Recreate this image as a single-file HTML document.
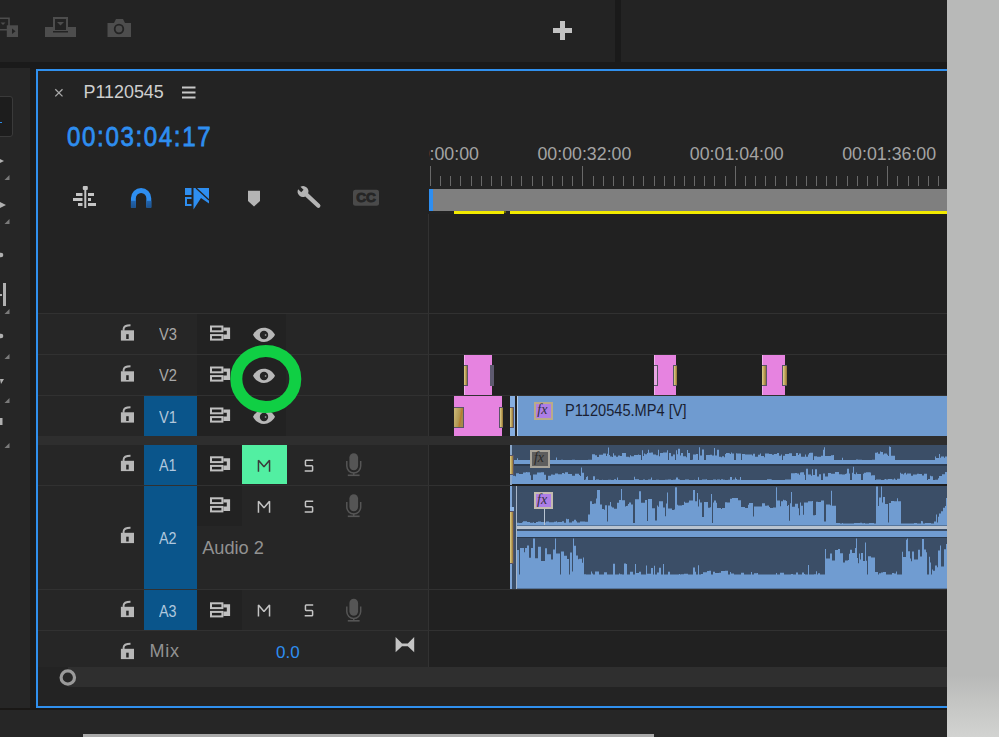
<!DOCTYPE html>
<html><head><meta charset="utf-8"><style>
*{margin:0;padding:0;box-sizing:border-box}
html,body{width:999px;height:737px;overflow:hidden;background:#262626;font-family:"Liberation Sans",sans-serif}
.a{position:absolute}
.t{position:absolute;white-space:nowrap;line-height:1}
svg{position:absolute;overflow:visible}
</style></head>
<body>
<div class="a" style="left:0px;top:0px;width:947px;height:69px;background:#1a1a1a;"></div>
<div class="a" style="left:0px;top:0px;width:615px;height:62px;background:#232323;"></div>
<div class="a" style="left:621px;top:0px;width:326px;height:62px;background:#232323;"></div>
<svg style="left:0;top:0" width="140" height="62">
<g fill="#4d4d4d">
<path d="M-2,17.4H9.8V30.5H-2ZM-2,19H8.2V29H-2Z" fill-rule="evenodd"/>
<path d="M0.5,22.5H5.5L3,25Z"/>
<rect x="6.8" y="25.3" width="11.2" height="11.7"/>
<path d="M12,28.5L15.5,31.2L12,34Z" fill="#232323"/>
<path d="M45,27H53V17H68V27H76V37H45Z"/>
<rect x="55" y="19" width="11" height="11" fill="#232323"/>
<path d="M57,22H64L60.5,25.5Z"/>
<rect x="53" y="31" width="15" height="1.5" fill="#232323"/>
<path d="M107.5,23H114L116,19H123L125,23H131V37H107.5Z"/>
<circle cx="119" cy="29" r="4.3" fill="none" stroke="#232323" stroke-width="1.8"/>
</g></svg>
<div class="a" style="left:553px;top:28px;width:19px;height:5px;background:#c2c2c2;"></div>
<div class="a" style="left:560px;top:21px;width:5px;height:19px;background:#c2c2c2;"></div>
<div class="a" style="left:0px;top:69px;width:36px;height:641px;background:#1b1b1b;"></div>
<div class="a" style="left:0px;top:68px;width:30px;height:640px;background:#262626;"></div>
<div class="a" style="left:-5px;top:96px;width:18px;height:41px;background:#1d1d1d;border:1px solid #3a3a3a;border-radius:3px"></div>
<div class="a" style="left:0px;top:122px;width:2px;height:1px;background:#2d8ae6;"></div>
<svg style="left:0;top:0" width="30" height="737"><g fill="#7a7a7a"><path d="M9.5,175V180H4.5Z"/><path d="M9.5,219V224H4.5Z"/><path d="M9.5,309V314H4.5Z"/><path d="M9.5,354V359H4.5Z"/><path d="M9.5,398V403H4.5Z"/><path d="M9.5,443V448H4.5Z"/></g><g fill="#b0b0b0"><path d="M0,159L4,161L0,163Z"/><path d="M0,202L6,205L0,208Z"/><circle cx="1" cy="255" r="2.3"/><rect x="3" y="283" width="3" height="23"/><rect x="0" y="294" width="2" height="2"/><circle cx="1" cy="336" r="2.3"/><path d="M0,379H4L1,384Z"/><rect x="0" y="418" width="2.5" height="7"/></g></svg>
<div class="a" style="left:0px;top:708px;width:947px;height:2px;background:#1a1816;"></div>
<div class="a" style="left:83px;top:734px;width:571px;height:3px;background:#a9a9a9;"></div>
<div class="a" style="left:36px;top:68.5px;width:920px;height:639.5px;background:#232323;border:2px solid #3090ee"></div>
<div class="a" style="left:429px;top:214px;width:518px;height:453px;background:#212121;"></div>
<svg style="left:0;top:0" width="220" height="110"><g stroke="#aaaaaa" stroke-width="1.3"><path d="M55.3,89.2L62.5,96.4M62.5,89.2L55.3,96.4"/></g>
<g fill="#c8c8c8"><rect x="182" y="86.5" width="13.5" height="2"/><rect x="182" y="91.5" width="13.5" height="2"/><rect x="182" y="96.5" width="13.5" height="2"/></g></svg>
<div class="t" style="left:83.5px;top:84px;font-size:17.9px;color:#cfcfcf;">P1120545</div>
<div class="t" style="left:66.5px;top:121.5px;font-size:28.4px;color:#2e8ef0;transform:scaleX(0.85);transform-origin:0 0;letter-spacing:1.9px;-webkit-text-stroke:0.8px #2e8ef0">00:03:04:17</div>
<svg style="left:0;top:0" width="400" height="220">
<g fill="#c4c4c4">
<rect x="84.3" y="189" width="2" height="19"/><rect x="82.8" y="186" width="5" height="4" rx="1"/>
<rect x="76" y="193" width="6.5" height="3"/><rect x="88" y="193" width="6" height="3"/>
<rect x="73" y="198" width="9.5" height="3"/><rect x="88" y="198" width="3" height="3"/>
<rect x="78" y="203" width="4.5" height="3"/><rect x="88" y="203" width="8" height="3"/>
</g>
<defs><linearGradient id="mg" x1="0" y1="0" x2="0" y2="1"><stop offset="0" stop-color="#2366b0"/><stop offset="1" stop-color="#1b5290"/></linearGradient></defs>
<path d="M133.4,207.5V198.2A7.7,7.7 0 0 1 148.8,198.2V207.5" fill="none" stroke="#2e8ef0" stroke-width="4.9"/>
<rect x="130.9" y="200.8" width="5" height="6.8" fill="url(#mg)"/><rect x="146.3" y="200.8" width="5" height="6.8" fill="url(#mg)"/>
<g fill="#2e8ef0">
<rect x="185" y="188" width="6.5" height="7"/>
<path d="M185,197H191.5V206H185ZM187,199V204H191.5V199Z" fill-rule="evenodd"/>
<path d="M193.5,188H209V203.5L201,198L193.5,209.5Z"/>
</g>
<path d="M196,188L209,200" stroke="#232323" stroke-width="1.3"/>
<path d="M248,190.7H260V201L254,206.5L248,201Z" fill="#b4b4b4"/>
<g transform="translate(303,191.5) rotate(-47)" fill="#b4b4b4">
<path d="M-5.4,0A5.4,5.4 0 0 1 -1.7,-5.1V-0.8H1.7V-5.1A5.4,5.4 0 0 1 5.4,0A5.4,5.4 0 0 1 2.1,5V21A2.1,2.1 0 0 1 -2.1,21V5A5.4,5.4 0 0 1 -5.4,0Z"/>
</g>
<rect x="353" y="189.7" width="26" height="16" rx="2.5" fill="#4a4a4a"/>
<text x="356.3" y="202.3" font-family="Liberation Sans" font-weight="bold" font-size="12.8" fill="#252525" stroke="#252525" stroke-width="0.9" textLength="19.6" lengthAdjust="spacingAndGlyphs">CC</text>
</svg>
<div class="a" style="left:429px;top:140px;width:518px;height:30px;overflow:hidden">
<div class="t" style="left:-44.0px;top:6px;width:94px;text-align:center;font-size:17.8px;color:#a4a4a4">00:00:00:00</div>
<div class="t" style="left:108.4px;top:6px;width:94px;text-align:center;font-size:17.8px;color:#a4a4a4">00:00:32:00</div>
<div class="t" style="left:260.8px;top:6px;width:94px;text-align:center;font-size:17.8px;color:#a4a4a4">00:01:04:00</div>
<div class="t" style="left:413.2px;top:6px;width:94px;text-align:center;font-size:17.8px;color:#a4a4a4">00:01:36:00</div>
</div>
<svg style="left:0;top:0" width="947" height="220"><g fill="#696969"><rect x="430" y="166" width="1" height="20"/><rect x="440" y="176" width="1" height="10"/><rect x="450" y="176" width="1" height="10"/><rect x="460" y="176" width="1" height="10"/><rect x="471" y="176" width="1" height="10"/><rect x="481" y="176" width="1" height="10"/><rect x="491" y="176" width="1" height="10"/><rect x="501" y="176" width="1" height="10"/><rect x="511" y="176" width="1" height="10"/><rect x="521" y="176" width="1" height="10"/><rect x="532" y="176" width="1" height="10"/><rect x="542" y="176" width="1" height="10"/><rect x="552" y="176" width="1" height="10"/><rect x="562" y="176" width="1" height="10"/><rect x="572" y="176" width="1" height="10"/><rect x="582" y="166" width="1" height="20"/><rect x="593" y="176" width="1" height="10"/><rect x="603" y="176" width="1" height="10"/><rect x="613" y="176" width="1" height="10"/><rect x="623" y="176" width="1" height="10"/><rect x="633" y="176" width="1" height="10"/><rect x="643" y="176" width="1" height="10"/><rect x="654" y="176" width="1" height="10"/><rect x="664" y="176" width="1" height="10"/><rect x="674" y="176" width="1" height="10"/><rect x="684" y="176" width="1" height="10"/><rect x="694" y="176" width="1" height="10"/><rect x="704" y="176" width="1" height="10"/><rect x="714" y="176" width="1" height="10"/><rect x="725" y="176" width="1" height="10"/><rect x="735" y="166" width="1" height="20"/><rect x="745" y="176" width="1" height="10"/><rect x="755" y="176" width="1" height="10"/><rect x="765" y="176" width="1" height="10"/><rect x="775" y="176" width="1" height="10"/><rect x="786" y="176" width="1" height="10"/><rect x="796" y="176" width="1" height="10"/><rect x="806" y="176" width="1" height="10"/><rect x="816" y="176" width="1" height="10"/><rect x="826" y="176" width="1" height="10"/><rect x="836" y="176" width="1" height="10"/><rect x="847" y="176" width="1" height="10"/><rect x="857" y="176" width="1" height="10"/><rect x="867" y="176" width="1" height="10"/><rect x="877" y="176" width="1" height="10"/><rect x="887" y="166" width="1" height="20"/><rect x="897" y="176" width="1" height="10"/><rect x="908" y="176" width="1" height="10"/><rect x="918" y="176" width="1" height="10"/><rect x="928" y="176" width="1" height="10"/><rect x="938" y="176" width="1" height="10"/></g></svg>
<div class="a" style="left:433px;top:189px;width:514px;height:22px;background:#7f7f7f;"></div>
<div class="a" style="left:429px;top:189px;width:3.5px;height:22px;background:#2e8ef0;"></div>
<div class="a" style="left:454px;top:211px;width:50px;height:3px;background:#f2ea00;"></div>
<div class="a" style="left:510px;top:211px;width:437px;height:3px;background:#f2ea00;"></div>
<div class="a" style="left:504px;top:211px;width:2px;height:2px;background:#6a6a00;"></div>
<div class="a" style="left:38px;top:313px;width:390px;height:354px;background:#262626;"></div>
<div class="a" style="left:427.5px;top:214px;width:1.6px;height:453px;background:#323232;"></div>
<div class="a" style="left:38px;top:312.6px;width:909px;height:1.7px;background:#313131;"></div>
<div class="a" style="left:38px;top:353.6px;width:909px;height:1.7px;background:#313131;"></div>
<div class="a" style="left:38px;top:394.6px;width:909px;height:1.7px;background:#313131;"></div>
<div class="a" style="left:38px;top:484.6px;width:909px;height:1.7px;background:#313131;"></div>
<div class="a" style="left:38px;top:588.6px;width:909px;height:1.7px;background:#313131;"></div>
<div class="a" style="left:38px;top:629.6px;width:909px;height:1.7px;background:#313131;"></div>
<div class="a" style="left:38px;top:436px;width:909px;height:9px;background:#2e2e2e;"></div>
<div class="a" style="left:197px;top:445px;width:45px;height:40px;background:#222222;"></div>
<div class="a" style="left:197px;top:486px;width:45px;height:40px;background:#222222;"></div>
<div class="a" style="left:197px;top:590px;width:45px;height:40px;background:#222222;"></div>
<div class="a" style="left:197px;top:314px;width:89px;height:40px;background:#222222;"></div>
<div class="a" style="left:197px;top:355px;width:89px;height:40px;background:#222222;"></div>
<div class="a" style="left:197px;top:396px;width:89px;height:40px;background:#222222;"></div>
<div class="a" style="left:144px;top:396px;width:53px;height:40px;background:#0a558b;"></div>
<div class="a" style="left:144px;top:445px;width:53px;height:40px;background:#0a558b;"></div>
<div class="a" style="left:144px;top:486px;width:53px;height:103px;background:#0a558b;"></div>
<div class="a" style="left:144px;top:590px;width:53px;height:40px;background:#0a558b;"></div>
<svg style="left:0;top:0" width="430" height="700"><g transform="translate(120.9,324.3)"><path d="M2.7,6.5V4.6Q3,1 9.6,1" fill="none" stroke="#b4b4b4" stroke-width="1.9"/><rect x="0" y="6" width="13.1" height="10.3" fill="#b8b8b8"/><rect x="5.3" y="9.9" width="2.5" height="4.8" fill="#262626"/></g><g transform="translate(210,325.5)"><g fill="none" stroke="#c0c0c0" stroke-width="2"><rect x="1" y="1" width="11.4" height="4.8"/><rect x="1" y="9.6" width="11.4" height="4.5"/></g><path d="M13.4,1.9H20.1V13.6H13.4V9.1H16.8V5.2H13.4Z" fill="#c0c0c0"/></g><g transform="translate(120.9,365.3)"><path d="M2.7,6.5V4.6Q3,1 9.6,1" fill="none" stroke="#b4b4b4" stroke-width="1.9"/><rect x="0" y="6" width="13.1" height="10.3" fill="#b8b8b8"/><rect x="5.3" y="9.9" width="2.5" height="4.8" fill="#262626"/></g><g transform="translate(210,366.5)"><g fill="none" stroke="#c0c0c0" stroke-width="2"><rect x="1" y="1" width="11.4" height="4.8"/><rect x="1" y="9.6" width="11.4" height="4.5"/></g><path d="M13.4,1.9H20.1V13.6H13.4V9.1H16.8V5.2H13.4Z" fill="#c0c0c0"/></g><g transform="translate(120.9,406.3)"><path d="M2.7,6.5V4.6Q3,1 9.6,1" fill="none" stroke="#b4b4b4" stroke-width="1.9"/><rect x="0" y="6" width="13.1" height="10.3" fill="#b8b8b8"/><rect x="5.3" y="9.9" width="2.5" height="4.8" fill="#262626"/></g><g transform="translate(210,407.5)"><g fill="none" stroke="#c0c0c0" stroke-width="2"><rect x="1" y="1" width="11.4" height="4.8"/><rect x="1" y="9.6" width="11.4" height="4.5"/></g><path d="M13.4,1.9H20.1V13.6H13.4V9.1H16.8V5.2H13.4Z" fill="#c0c0c0"/></g><g transform="translate(253,327.6)"><path d="M0,7.2C5,-2.3 17,-2.3 22,7.2C17,16.7 5,16.7 0,7.2Z" fill="#b8b8b8"/><circle cx="11" cy="7.4" r="4.2" fill="#262626"/><circle cx="12.6" cy="7.4" r="0.9" fill="#8a8a8a"/></g><g transform="translate(253,368.6)"><path d="M0,7.2C5,-2.3 17,-2.3 22,7.2C17,16.7 5,16.7 0,7.2Z" fill="#b8b8b8"/><circle cx="11" cy="7.4" r="4.2" fill="#262626"/><circle cx="12.6" cy="7.4" r="0.9" fill="#8a8a8a"/></g><g transform="translate(253,409.6)"><path d="M0,7.2C5,-2.3 17,-2.3 22,7.2C17,16.7 5,16.7 0,7.2Z" fill="#b8b8b8"/><circle cx="11" cy="7.4" r="4.2" fill="#262626"/><circle cx="12.6" cy="7.4" r="0.9" fill="#8a8a8a"/></g><g transform="translate(120.9,454.8)"><path d="M2.7,6.5V4.6Q3,1 9.6,1" fill="none" stroke="#b4b4b4" stroke-width="1.9"/><rect x="0" y="6" width="13.1" height="10.3" fill="#b8b8b8"/><rect x="5.3" y="9.9" width="2.5" height="4.8" fill="#262626"/></g><g transform="translate(210,456.3)"><g fill="none" stroke="#c0c0c0" stroke-width="2"><rect x="1" y="1" width="11.4" height="4.8"/><rect x="1" y="9.6" width="11.4" height="4.5"/></g><path d="M13.4,1.9H20.1V13.6H13.4V9.1H16.8V5.2H13.4Z" fill="#c0c0c0"/></g><g transform="translate(346,453)" fill="#555555"><rect x="3.4" y="0.2" width="8.7" height="17" rx="4.35"/><path d="M0.8,8V13A6.95,6.95 0 0 0 14.7,13V8" fill="none" stroke="#555555" stroke-width="1.5"/><rect x="7" y="19.5" width="1.5" height="2.5"/><rect x="1.8" y="21.5" width="11.8" height="1.6"/></g><g transform="translate(120.9,526.8)"><path d="M2.7,6.5V4.6Q3,1 9.6,1" fill="none" stroke="#b4b4b4" stroke-width="1.9"/><rect x="0" y="6" width="13.1" height="10.3" fill="#b8b8b8"/><rect x="5.3" y="9.9" width="2.5" height="4.8" fill="#262626"/></g><g transform="translate(210,497.3)"><g fill="none" stroke="#c0c0c0" stroke-width="2"><rect x="1" y="1" width="11.4" height="4.8"/><rect x="1" y="9.6" width="11.4" height="4.5"/></g><path d="M13.4,1.9H20.1V13.6H13.4V9.1H16.8V5.2H13.4Z" fill="#c0c0c0"/></g><g transform="translate(346,494)" fill="#555555"><rect x="3.4" y="0.2" width="8.7" height="17" rx="4.35"/><path d="M0.8,8V13A6.95,6.95 0 0 0 14.7,13V8" fill="none" stroke="#555555" stroke-width="1.5"/><rect x="7" y="19.5" width="1.5" height="2.5"/><rect x="1.8" y="21.5" width="11.8" height="1.6"/></g><g transform="translate(120.9,600.8)"><path d="M2.7,6.5V4.6Q3,1 9.6,1" fill="none" stroke="#b4b4b4" stroke-width="1.9"/><rect x="0" y="6" width="13.1" height="10.3" fill="#b8b8b8"/><rect x="5.3" y="9.9" width="2.5" height="4.8" fill="#262626"/></g><g transform="translate(210,602.3)"><g fill="none" stroke="#c0c0c0" stroke-width="2"><rect x="1" y="1" width="11.4" height="4.8"/><rect x="1" y="9.6" width="11.4" height="4.5"/></g><path d="M13.4,1.9H20.1V13.6H13.4V9.1H16.8V5.2H13.4Z" fill="#c0c0c0"/></g><g transform="translate(346,598.5)" fill="#555555"><rect x="3.4" y="0.2" width="8.7" height="17" rx="4.35"/><path d="M0.8,8V13A6.95,6.95 0 0 0 14.7,13V8" fill="none" stroke="#555555" stroke-width="1.5"/><rect x="7" y="19.5" width="1.5" height="2.5"/><rect x="1.8" y="21.5" width="11.8" height="1.6"/></g><g transform="translate(120.9,642.8)"><path d="M2.7,6.5V4.6Q3,1 9.6,1" fill="none" stroke="#b4b4b4" stroke-width="1.9"/><rect x="0" y="6" width="13.1" height="10.3" fill="#b8b8b8"/><rect x="5.3" y="9.9" width="2.5" height="4.8" fill="#262626"/></g></svg>
<div class="a" style="left:242px;top:444.6px;width:44.8px;height:39.8px;background:#52efa2;"></div>
<div class="t" style="left:158.7px;top:326.4px;font-size:17.3px;color:#a8a8a8;transform:scaleX(0.85);transform-origin:0 0">V3</div>
<div class="t" style="left:158.7px;top:367.4px;font-size:17.3px;color:#a8a8a8;transform:scaleX(0.85);transform-origin:0 0">V2</div>
<div class="t" style="left:158.7px;top:408.6px;font-size:17.3px;color:#b2c6da;transform:scaleX(0.85);transform-origin:0 0">V1</div>
<div class="t" style="left:158.9px;top:457px;font-size:16.4px;color:#b0c8de;transform:scaleX(0.875);transform-origin:0 0">A1</div>
<div class="t" style="left:158.9px;top:529.7px;font-size:16.4px;color:#b0c8de;transform:scaleX(0.875);transform-origin:0 0">A2</div>
<div class="t" style="left:158.9px;top:602.5px;font-size:16.4px;color:#b0c8de;transform:scaleX(0.875);transform-origin:0 0">A3</div>
<svg style="left:0;top:0" width="430" height="700"><path d="M258.45,471.8V460.25L264,466.7L269.55,460.25V471.8" fill="none" stroke="#3a3a3a" stroke-width="1.5" stroke-linejoin="bevel"/><path d="M313.2,460.25H306.2Q305.45,460.25 305.45,461.1V464.9Q305.45,465.7 306.2,465.7H311.8Q312.6,465.7 312.6,466.5V470.2Q312.6,471.0 311.8,471.0H304.7" fill="none" stroke="#c4c4c4" stroke-width="1.5"/><path d="M258.45,512.8V501.25L264,507.7L269.55,501.25V512.8" fill="none" stroke="#c4c4c4" stroke-width="1.5" stroke-linejoin="bevel"/><path d="M313.2,501.25H306.2Q305.45,501.25 305.45,502.1V505.9Q305.45,506.7 306.2,506.7H311.8Q312.6,506.7 312.6,507.5V511.2Q312.6,512.0 311.8,512.0H304.7" fill="none" stroke="#c4c4c4" stroke-width="1.5"/><path d="M258.45,616.5V604.95L264,611.4000000000001L269.55,604.95V616.5" fill="none" stroke="#c4c4c4" stroke-width="1.5" stroke-linejoin="bevel"/><path d="M313.2,604.95H306.2Q305.45,604.95 305.45,605.8000000000001V609.6Q305.45,610.4000000000001 306.2,610.4000000000001H311.8Q312.6,610.4000000000001 312.6,611.2V614.9000000000001Q312.6,615.7 311.8,615.7H304.7" fill="none" stroke="#c4c4c4" stroke-width="1.5"/></svg>
<div class="t" style="left:202.2px;top:538.6px;font-size:18.2px;color:#929292;">Audio 2</div>
<div class="t" style="left:149.5px;top:642.3px;font-size:18px;color:#929292;letter-spacing:0.7px">Mix</div>
<div class="t" style="left:276px;top:644px;font-size:17px;color:#2e8ef0;">0.0</div>
<svg style="left:0;top:0" width="430" height="700"><path d="M395.6,637V652.2L402,646.2H407.8L414.2,652.2V637L407.8,643.5H402Z" fill="#c4c4c4"/></svg>
<div class="a" style="left:67.7px;top:667.4px;width:880px;height:19.3px;background:#2f2f2f;"></div>
<svg style="left:0;top:0" width="100" height="700"><circle cx="67.8" cy="677.5" r="6.7" fill="#272727" stroke="#9a9a9a" stroke-width="3.2"/></svg>
<div class="a" style="left:463.8px;top:355px;width:28.5px;height:40px;background:#e683e0;"></div>
<div class="a" style="left:463.8px;top:355px;width:1.2px;height:40px;background:#f2b0ee;"></div>
<div class="a" style="left:654.1px;top:355px;width:21.899999999999977px;height:40px;background:#e683e0;"></div>
<div class="a" style="left:654.1px;top:355px;width:1.2px;height:40px;background:#f2b0ee;"></div>
<div class="a" style="left:762.1px;top:355px;width:23.399999999999977px;height:40px;background:#e683e0;"></div>
<div class="a" style="left:762.1px;top:355px;width:1.2px;height:40px;background:#f2b0ee;"></div>
<div class="a" style="left:463.8px;top:365.2px;width:4.7px;height:21px;background:linear-gradient(90deg,#ded08e,#b89a52 60%,#8f7438);border:1px solid #5a5468;border-left:none"></div>
<div class="a" style="left:490.4px;top:365.2px;width:3.3px;height:21px;background:#5e5a70;"></div>
<div class="a" style="left:654.1px;top:365.2px;width:3.6px;height:21px;background:#e9a6e4;border:1px solid #5a5468;border-left:none"></div>
<div class="a" style="left:672.9px;top:365.2px;width:4.3px;height:21px;background:linear-gradient(90deg,#ded08e,#b89a52 60%,#8f7438);border:1px solid #5a5468;border-right:none"></div>
<div class="a" style="left:762.1px;top:365.2px;width:4.9px;height:21px;background:linear-gradient(90deg,#ded08e,#b89a52 60%,#8f7438);border:1px solid #5a5468;border-left:none"></div>
<div class="a" style="left:781.8px;top:365.2px;width:4.8px;height:21px;background:linear-gradient(90deg,#ded08e,#b89a52 60%,#8f7438);border:1px solid #5a5468;border-right:none"></div>
<div class="a" style="left:453.8px;top:396.1px;width:48.4px;height:40px;background:#e683e0;"></div>
<div class="a" style="left:453.8px;top:407px;width:10px;height:20.6px;background:linear-gradient(100deg,#cdbb7a,#b09650 55%,#b87a2c 68%,#a58a48 78%);border:1px solid #5a5468;border-left:none"></div>
<div class="a" style="left:498.9px;top:407px;width:3.8px;height:20.6px;background:linear-gradient(90deg,#ded08e,#b89a52 60%,#8f7438);border:1px solid #5a5468;border-right:none"></div>
<div class="a" style="left:509.8px;top:396.1px;width:5.7px;height:40px;background:#86aee0;"></div>
<div class="a" style="left:509.8px;top:407px;width:4.7px;height:20.6px;background:linear-gradient(90deg,#ded08e,#b89a52 60%,#8f7438);border:1px solid #5a5468;border-left:none"></div>
<div class="a" style="left:517.3px;top:396.1px;width:430px;height:40px;background:#6f9bd0;"></div>
<div class="a" style="left:517.3px;top:396.1px;width:1.2px;height:40px;background:#b9d0ea;"></div>
<div class="a" style="left:533.8px;top:402px;width:19.5px;height:17.5px;background:#ae7ee6;border:2px solid #b9ab8a"></div>
<div class="t" style="left:537.3px;top:403px;font-size:14px;font-style:italic;color:#33303f;font-family:'Liberation Serif',serif">fx</div>
<div class="t" style="left:565px;top:402.3px;font-size:16.5px;color:#1a1f33;transform:scaleX(0.885);transform-origin:0 0">P1120545.MP4 [V]</div>
<div class="a" style="left:509.8px;top:445px;width:437.2px;height:40px;background:#3b4e67;"></div>
<div class="a" style="left:509.8px;top:486px;width:437.2px;height:103px;background:#3b4e67;"></div>
<svg style="left:0;top:0" width="947" height="700"><path d="M512,464V460.0H513V460.0H514V460.0H517V458.2H518V460.0H521V459.9H524V460.0H525V460.0H526V459.9H529V460.0H530V460.0H533V459.8H535V459.7H536V459.6H537V460.0H539V460.0H543V460.0H545V460.0H548V460.0H549V460.0H552V460.0H556V457.4H557V460.0H558V460.0H561V459.7H563V460.0H566V460.0H568V460.0H572V459.7H575V460.0H577V460.0H581V459.9H584V460.0H588V459.7H592V454.2H595V455.2H597V457.1H599V454.7H603V453.5H606V456.1H607V453.7H608V447.4H609V454.9H610V456.6H612V457.0H613V453.2H614V455.5H616V456.7H618V455.5H620V456.1H622V453.0H626V456.7H629V457.2H630V455.2H631V456.2H634V455.0H638V454.5H639V455.1H641V460.0H642V450.2H643V456.0H644V453.5H645V454.3H647V453.1H648V449.8H649V452.8H651V452.6H653V454.5H656V455.3H658V449.8H659V456.2H660V453.1H661V453.1H663V452.4H667V450.3H668V460.0H669V453.0H671V456.3H673V454.6H675V460.0H676V450.2H677V454.3H678V448.7H680V455.4H681V453.0H683V456.3H686V457.3H687V450.0H688V453.0H690V460.0H692V459.8H693V454.4H696V453.9H698V460.0H699V447.3H700V455.5H702V449.4H704V460.0H706V455.1H710V454.7H712V455.5H714V448.0H715V455.4H717V449.8H719V456.7H721V457.3H722V456.3H724V457.2H725V453.9H726V453.1H729V453.3H730V453.9H731V452.6H732V453.6H734V460.0H736V453.2H737V453.5H741V460.0H742V453.9H743V453.9H745V454.5H748V454.6H752V455.6H753V453.7H755V456.8H758V454.7H760V453.4H761V456.1H764V457.2H765V453.5H769V454.0H772V454.8H774V453.9H777V452.9H779V455.8H781V454.4H782V460.0H783V455.7H785V454.1H789V453.2H792V456.1H796V453.1H798V455.1H799V453.4H801V456.7H805V454.6H806V456.7H808V454.6H809V452.9H810V452.8H813V460.0H814V456.3H817V456.8H821V455.7H823V449.8H824V447.3H825V455.9H827V455.9H831V455.3H833V455.0H834V460.0H835V460.0H838V460.0H840V460.0H842V457.8H843V460.0H846V460.0H850V460.0H853V460.0H855V460.0H856V459.6H858V459.7H862V460.0H866V460.0H868V460.0H872V459.7H875V452.8H877V452.2H878V453.8H880V451.4H881V451.9H883V454.5H884V453.5H887V454.8H888V456.1H889V446.5H890V447.0H891V455.7H895V460.0H896V460.0H898V460.0H900V460.0H904V460.0H908V460.0H912V460.0H914V459.9H917V460.0H919V460.0H921V460.0H924V460.0H926V460.0H927V460.0H928V460.0H930V460.0H933V460.0H935V456.5H936V458.1H939V453.9H940V457.7H941V456.6H944V457.7H945V456.5H947V464Z" fill="#709cd1"/><path d="M512,484V468.6H513V475.8H515V476.2H516V473.3H519V474.1H523V472.5H526V472.1H527V472.3H530V475.3H531V480.0H533V474.5H537V472.6H541V472.3H544V474.8H546V480.0H548V475.7H551V474.6H553V474.7H555V473.4H558V474.3H562V472.9H564V473.7H565V472.2H568V474.1H572V475.7H575V473.8H579V475.1H580V476.0H581V467.6H582V472.7H584V480.0H585V479.6H586V477.1H587V476.3H588V480.0H589V480.0H591V480.0H592V480.0H593V476.3H595V480.0H596V479.6H598V479.5H599V480.0H600V480.0H602V479.7H603V480.0H606V480.0H608V479.7H611V480.0H612V480.0H614V479.2H616V480.0H617V477.5H618V480.0H620V480.0H624V480.0H627V480.0H628V480.0H629V480.0H630V480.0H632V480.0H634V476.8H635V479.3H639V479.9H642V480.0H643V479.4H645V480.0H647V480.0H648V479.5H651V477.6H652V480.0H653V480.0H654V480.0H655V480.0H656V479.7H659V480.0H660V480.0H661V480.0H663V480.0H665V479.7H668V479.4H671V480.0H673V479.8H675V479.4H676V477.4H678V479.2H679V479.6H680V480.0H681V480.0H683V480.0H684V480.0H685V479.4H689V480.0H692V480.0H694V479.7H695V480.0H698V477.2H699V480.0H702V479.6H706V479.3H707V480.0H709V479.9H712V480.0H713V479.5H716V480.0H717V479.4H720V479.9H721V479.2H723V479.7H725V480.0H726V480.0H728V479.7H730V476.9H732V480.0H733V479.4H735V477.5H736V479.1H737V479.7H740V476.9H741V480.0H742V480.0H743V480.0H746V480.0H748V480.0H752V480.0H754V480.0H756V480.0H757V480.0H761V480.0H765V480.0H767V479.2H771V479.4H772V480.0H774V480.0H776V480.0H779V480.0H780V480.0H782V480.0H783V480.0H785V479.6H786V479.4H789V479.6H791V473.2H795V473.1H797V473.6H799V474.8H800V472.6H801V472.3H804V474.7H805V480.0H806V468.7H808V474.6H811V475.8H812V469.3H813V475.0H815V469.2H817V476.6H819V474.2H821V480.0H822V480.0H823V473.4H825V476.4H828V473.0H831V473.8H835V472.1H839V474.3H842V474.6H845V474.0H846V473.5H847V468.8H849V473.5H850V480.0H852V472.8H853V466.8H854V473.9H855V474.2H856V472.4H857V474.0H861V480.0H862V480.0H863V473.8H864V472.7H866V472.2H870V472.5H871V475.5H872V475.3H875V479.9H876V479.6H878V479.6H881V480.0H884V479.4H885V479.1H886V479.4H888V479.1H889V479.1H892V479.4H894V478.5H895V479.4H896V480.0H897V478.8H900V472.7H901V473.7H903V474.4H904V473.3H905V472.7H906V474.6H907V473.6H911V475.8H913V474.5H914V474.6H917V473.7H919V474.1H922V475.6H924V473.7H927V480.0H928V479.0H930V475.7H931V476.2H933V480.0H935V479.8H938V478.3H939V476.1H942V474.3H945V472.0H947V484Z" fill="#709cd1"/><path d="M517,525.6V522.7H519V523.0H522V522.3H523V521.3H527V521.9H530V522.7H533V522.2H534V522.9H535V523.0H536V521.9H538V521.4H541V521.9H544V522.8H545V522.6H546V521.6H549V522.2H552V522.3H554V521.8H556V521.2H557V522.3H558V522.0H562V521.3H564V522.7H566V518.8H567V519.3H568V519.1H569V522.5H572V521.3H574V519.7H576V521.2H577V522.6H579V522.5H580V521.5H582V521.4H585V521.8H588V514.6H590V501.3H592V504.1H594V503.4H596V498.6H597V490.0H599V489.9H600V504.6H602V509.0H604V509.7H605V505.2H607V521.5H608V505.4H610V502.1H611V506.5H612V507.6H614V508.7H617V502.7H619V499.9H621V489.0H622V500.2H625V506.6H626V506.0H627V505.8H628V503.9H629V502.4H631V504.6H633V523.1H635V499.2H639V491.2H641V502.7H645V499.9H647V521.0H648V499.0H652V508.3H655V520.5H657V505.4H658V506.7H659V501.3H663V507.5H665V516.2H666V503.6H667V492.6H668V508.6H672V509.9H674V509.6H675V487.3H677V504.8H678V505.6H679V505.6H682V504.9H684V501.7H685V502.8H688V502.6H689V500.5H693V489.9H695V501.3H697V493.0H698V506.4H699V499.6H700V502.6H702V517.1H704V501.9H708V507.8H710V507.2H711V493.9H712V522.9H713V502.5H714V500.5H716V502.7H717V507.9H721V509.1H722V508.0H724V507.9H725V502.3H727V502.6H730V498.7H732V498.1H735V498.0H738V500.3H741V507.0H745V508.0H748V504.7H749V503.1H753V516.5H754V506.6H758V506.4H762V503.3H765V505.8H767V505.4H769V506.9H770V508.1H773V507.6H776V487.2H777V500.4H780V506.2H781V501.3H783V499.7H784V500.3H786V501.1H787V506.0H788V505.0H789V520.8H790V503.2H791V492.1H792V506.8H795V503.8H798V508.3H799V515.3H800V502.4H801V505.8H803V514.8H804V502.4H808V501.3H812V501.0H813V515.3H815V514.9H816V501.8H818V502.0H821V500.6H824V521.5H826V504.5H830V505.2H831V490.8H832V505.8H836V523.1H839V523.0H840V523.6H842V522.9H843V523.6H844V523.6H847V523.6H848V523.4H851V523.6H852V523.6H854V523.0H857V522.9H860V522.8H862V523.2H864V523.1H865V523.6H866V523.6H867V523.6H869V523.0H873V522.9H874V523.6H876V486.6H878V506.0H879V497.6H881V486.6H882V502.5H883V497.1H885V503.9H888V522.4H889V502.9H891V501.0H894V501.3H897V498.2H898V501.3H901V523.6H902V523.6H904V523.6H907V523.6H909V523.6H912V523.6H913V523.6H914V523.1H917V523.5H920V523.6H921V520.9H922V521.2H923V523.6H925V523.1H926V523.1H928V522.9H931V523.6H934V521.6H936V514.4H937V522.6H938V516.8H939V513.6H941V511.3H943V507.7H945V506.1H946V497.9H947V525.6Z" fill="#709cd1"/><path d="M517,588.5V549.9H519V574.5H520V548.0H524V552.2H525V547.9H527V545.6H529V557.7H531V548.1H533V538.5H535V558.3H538V546.8H541V561.0H545V548.3H547V554.2H551V559.5H553V549.5H555V538.5H556V553.6H560V574.5H561V551.4H564V555.8H567V559.1H569V574.5H570V552.6H572V571.4H573V538.5H574V545.7H576V555.5H577V555.5H578V559.2H579V558.8H582V562.8H583V557.4H584V574.3H586V574.5H589V574.5H591V571.5H592V573.5H593V574.5H595V571.6H599V574.5H601V574.5H604V572.2H607V574.5H609V574.5H611V574.5H613V563.8H615V574.5H616V574.5H617V574.5H619V573.5H620V574.2H622V574.5H624V563.6H626V564.0H627V574.5H629V574.5H630V571.8H633V574.5H635V564.1H636V572.9H639V571.8H641V574.5H643V574.5H646V565.4H647V573.8H651V567.9H653V574.5H654V565.7H655V574.5H657V572.4H659V567.8H661V574.5H663V564.1H664V574.5H666V574.5H667V574.5H668V571.7H670V574.5H671V574.5H673V574.5H676V574.5H679V573.9H680V574.5H681V574.3H684V573.8H688V574.5H691V574.5H693V567.6H695V571.8H696V574.5H698V565.2H699V574.5H701V574.1H703V572.3H707V571.1H709V570.8H710V570.8H711V574.5H713V571.8H715V572.9H717V572.9H719V572.7H721V570.9H725V570.8H728V574.5H730V571.9H731V573.4H734V574.5H736V574.5H738V574.5H740V574.5H741V572.7H744V574.5H745V574.5H746V574.5H750V574.5H751V571.9H752V574.5H754V573.3H756V573.3H757V572.9H758V574.5H762V574.5H763V574.5H765V574.5H767V574.5H770V574.5H773V574.5H776V572.9H777V574.5H778V574.5H780V572.8H784V574.5H787V574.5H791V574.0H793V574.5H796V572.6H798V574.4H800V574.5H802V572.4H804V574.1H805V574.5H807V574.5H808V565.1H809V574.5H810V574.5H814V574.2H816V571.3H817V574.5H818V573.2H820V574.5H822V574.5H825V549.1H826V558.4H830V553.4H832V560.4H835V550.1H838V549.0H840V553.3H843V562.4H845V560.6H848V559.9H849V553.7H850V549.8H852V553.0H855V548.1H856V538.5H857V558.0H858V563.2H859V553.5H860V559.6H861V553.1H863V561.1H865V542.5H866V560.8H867V574.5H868V556.3H871V557.4H875V571.9H878V574.5H879V573.3H881V572.4H883V572.0H886V574.5H888V574.5H892V572.9H894V573.6H896V571.5H897V574.5H899V574.5H902V551.7H903V556.9H906V539.8H907V538.5H908V551.2H910V558.5H911V561.2H912V551.6H914V559.6H918V549.7H920V556.6H922V538.9H924V549.4H926V552.2H927V574.5H929V556.8H930V562.4H931V574.5H932V569.6H933V570.7H935V565.5H937V567.2H938V550.5H940V545.4H941V566.5H944V549.2H946V544.1H947V588.5Z" fill="#709cd1"/></svg>
<div class="a" style="left:509.8px;top:464px;width:437.2px;height:2px;background:#2c3b4f;"></div>
<div class="a" style="left:509.8px;top:484.2px;width:437.2px;height:1.8px;background:#1e1e1e;"></div>
<div class="a" style="left:517px;top:525.6px;width:430px;height:3.4px;background:#b9c3cf;"></div>
<div class="a" style="left:517px;top:529px;width:430px;height:1.6px;background:#3b4e67;"></div>
<div class="a" style="left:517px;top:530.6px;width:430px;height:6.6px;background:#709cd1;"></div>
<div class="a" style="left:517px;top:537.2px;width:430px;height:1.3px;background:#2a3a4e;"></div>
<div class="a" style="left:509.8px;top:445px;width:2.2px;height:40px;background:#8aa6c8;"></div>
<div class="a" style="left:509.8px;top:486px;width:2.2px;height:103px;background:#7fa5d5;"></div>
<div class="a" style="left:512px;top:486px;width:4.5px;height:103px;background:#3b4e67;"></div>
<div class="a" style="left:516.3px;top:486px;width:1.2px;height:103px;background:#a9b6c8;"></div>
<div class="a" style="left:509.8px;top:455px;width:4.2px;height:20.4px;background:linear-gradient(90deg,#ded08e,#b89a52 60%,#8f7438);border:1px solid #5a5468;border-left:none"></div>
<div class="a" style="left:509.8px;top:511px;width:4.2px;height:53px;background:linear-gradient(90deg,#ded08e,#b89a52 60%,#8f7438);border:1px solid #5a5468;border-left:none"></div>
<div class="a" style="left:509.8px;top:506.5px;width:4.2px;height:4.5px;background:#8fb6e6;"></div>
<div class="a" style="left:530.4px;top:450px;width:19.5px;height:17.5px;background:#5e5e5e;border:2px solid #a8a49a"></div>
<div class="t" style="left:533.9px;top:451px;font-size:14px;font-style:italic;color:#2a2a2a;font-family:'Liberation Serif',serif">fx</div>
<div class="a" style="left:533.6px;top:491.5px;width:19.5px;height:17.5px;background:#ae7ee6;border:2px solid #c4bcb0"></div>
<div class="t" style="left:537.1px;top:492.5px;font-size:14px;font-style:italic;color:#33303f;font-family:'Liberation Serif',serif">fx</div>
<div class="a" style="left:543.5px;top:509px;width:1.3px;height:16px;background:#b8c4d2;"></div>
<div class="a" style="left:947px;top:0px;width:52px;height:737px;background:linear-gradient(#b8b9b8 0,#b8b9b8 675px,#c3c4c2 700px,#d2d3d1 737px);"></div>
<svg style="left:0;top:0" width="999" height="737"><ellipse cx="265.8" cy="379" rx="29.5" ry="28" fill="none" stroke="#10cf44" stroke-width="12"/></svg>
</body></html>
